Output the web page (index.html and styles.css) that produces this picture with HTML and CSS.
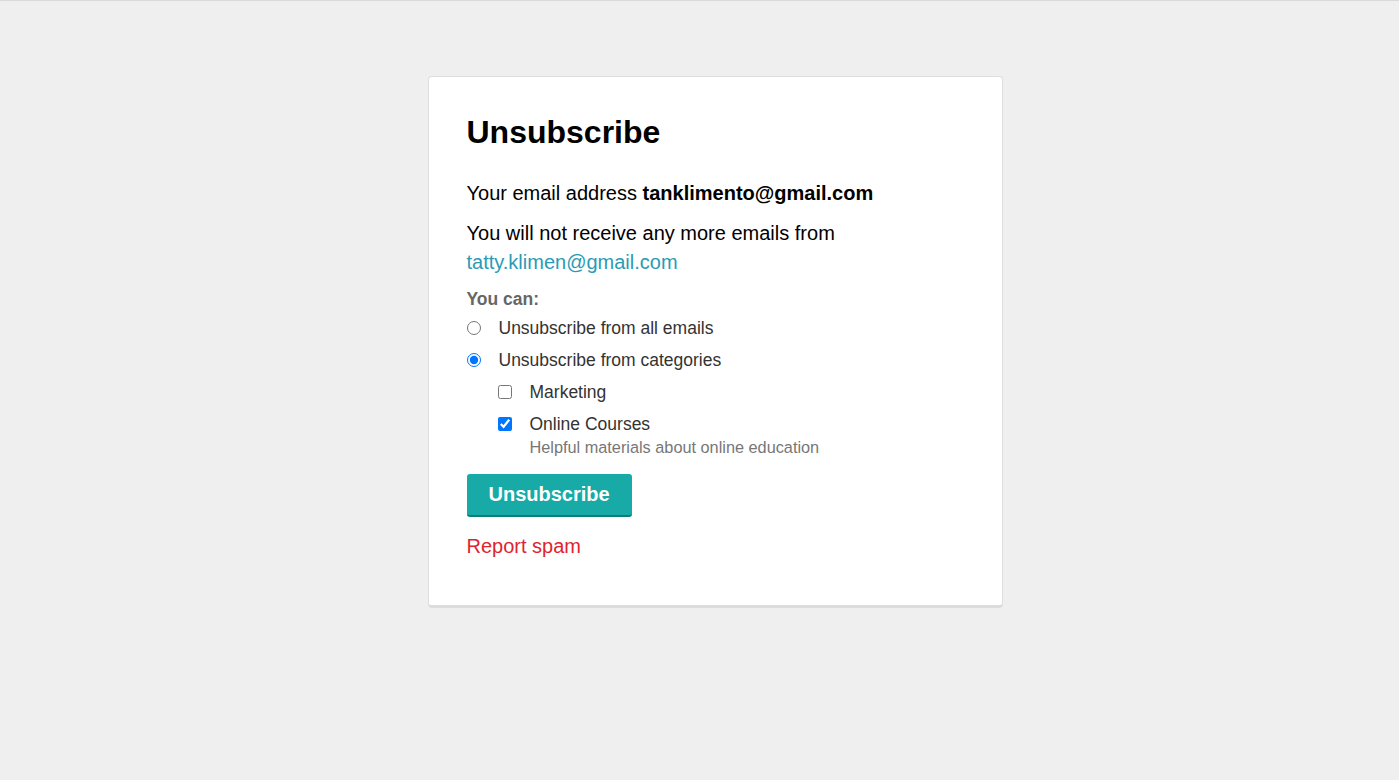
FILE: index.html
```html
<!DOCTYPE html>
<html lang="en">

<head>
    <meta charset="UTF-8">
    <title>Unsubscribe</title>
    <link rel="stylesheet" href="styles.css">
</head>

<body>
    <div class="page">
        <div class="card">
            <h1>Unsubscribe</h1>
            <p class="email-line">Your email address <b>tanklimento@gmail.com</b></p>
            <p class="from-line">You will not receive any more emails from<br><a href="#">tatty.klimen@gmail.com</a></p>

            <div class="options">
                <div class="options-title">You can:</div>
                <label class="option">
                    <input type="radio" name="mode">
                    <span>Unsubscribe from all emails</span>
                </label>
                <label class="option">
                    <input type="radio" name="mode" checked>
                    <span>Unsubscribe from categories</span>
                </label>
                <div class="categories">
                    <label class="option">
                        <input type="checkbox">
                        <span>Marketing</span>
                    </label>
                    <label class="option">
                        <input type="checkbox" checked>
                        <span>Online Courses
                            <small>Helpful materials about online education</small>
                        </span>
                    </label>
                </div>
            </div>

            <button class="btn-unsubscribe" type="button">Unsubscribe</button>
            <a class="report-spam" href="#">Report spam</a>
        </div>
    </div>
</body>

</html>
```

FILE: styles.css
```css
/* page */
html,
body {
    margin: 0;
    padding: 0;
}

body {
    background-color: #efefef;
    border-top: 1px solid #d9d9d9;
    font-family: "Liberation Sans", Arial, sans-serif;
    color: #000;
}

.page {
    display: flex;
    justify-content: center;
    padding: 75px 0 0 31px;
}

/* card */
.card {
    width: 498px;
    background-color: #fff;
    border: 1px solid #dedede;
    border-bottom: 3px solid #dcdcdc;
    border-radius: 4px;
    padding: 37px 37px 47px 38px;
}

h1 {
    margin: 0 0 28px 0;
    font-size: 32px;
    line-height: 37px;
    font-weight: bold;
}

.email-line,
.from-line {
    margin: 0 0 11px 0;
    font-size: 20px;
    line-height: 29px;
}

.from-line a {
    color: #2a9bb5;
    text-decoration: none;
}

/* options */
.options {
    margin-top: 12px;
    color: #333;
    font-size: 17.5px;
}

.options-title {
    color: #666;
    font-weight: bold;
    line-height: 21px;
    margin-bottom: 8px;
}

.option {
    display: flex;
    align-items: flex-start;
    line-height: 20px;
    margin-bottom: 12px;
}

.option input {
    margin: 3px 17px 0 0;
    width: 14px;
    height: 14px;
    flex: none;
}

.option span {
    padding-left: 1px;
}

.option small {
    display: block;
    font-size: 16.3px;
    color: #777;
    margin-top: 4px;
    line-height: 18px;
}

.categories {
    padding-left: 31px;
}

.categories .option:last-child {
    margin-bottom: 18px;
}

/* buttons */
.btn-unsubscribe {
    display: block;
    background-color: #17aaa7;
    color: #fff;
    border: none;
    border-bottom: 2px solid #0d7d7a;
    border-radius: 3px;
    font-family: "Liberation Sans", Arial, sans-serif;
    font-size: 20px;
    font-weight: bold;
    height: 43px;
    padding: 0 22px;
    margin: 0 0 17px 0;
}

.report-spam {
    display: inline-block;
    color: #e0242e;
    font-size: 20px;
    line-height: 24px;
    text-decoration: none;
}
```
